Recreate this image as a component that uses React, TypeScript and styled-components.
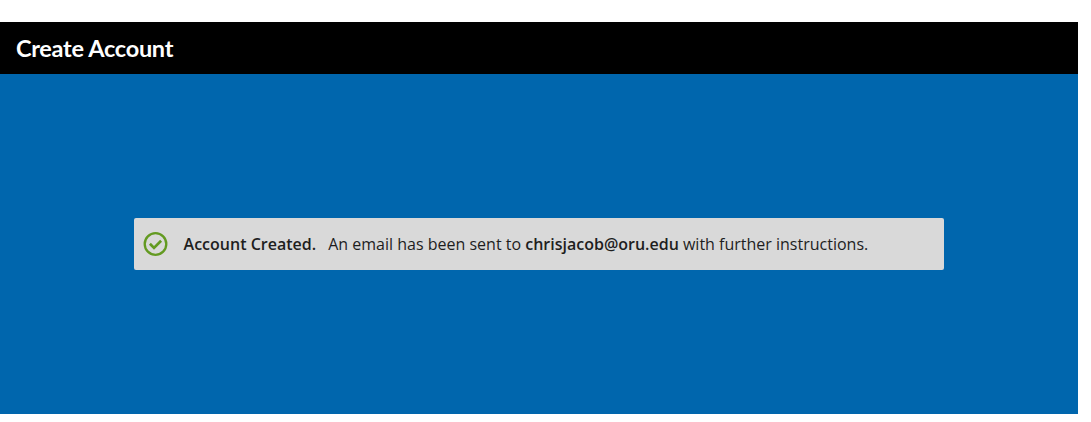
import React from "react";
import styled, { createGlobalStyle } from "styled-components";

const GlobalStyle = createGlobalStyle`
  body { margin: 0; background: #fff; }
`;

const Page = styled.div`
  box-sizing: border-box;
  height: 422px;
  padding: 22px 13px 8px 0;
  display: flex;
  flex-direction: column;
`;

const Header = styled.header`
  height: 52px;
  box-sizing: border-box;
  padding: 0 16px 1px;
  display: flex;
  align-items: center;
  background: #000;
`;

const Title = styled.h1`
  margin: 0;
  color: #fff;
  font: 700 23.5px/30px Lato, sans-serif;
  letter-spacing: -0.29px;
  white-space: nowrap;
`;

const Main = styled.main`
  flex: 1;
  display: flex;
  align-items: center;
  justify-content: center;
  background: #0066ad;
`;

const Alert = styled.div`
  box-sizing: border-box;
  width: 810px;
  height: 52px;
  padding: 0 9px;
  display: flex;
  align-items: center;
  border-radius: 2px;
  background: #d9d9d9;
`;

const CheckIcon = styled.svg`
  flex: none;
  width: 25px;
  height: 26px;
  margin-right: 15.6px;
`;

const Message = styled.p`
  margin: 0;
  color: #1e1e1e;
  font: 400 16px/24px "Open Sans", sans-serif;
  white-space: nowrap;
`;

const Strong = styled.strong<{ $gap?: number }>`
  font-weight: 600;
  margin-right: ${({ $gap = 0 }) => $gap}px;
`;

export default function App() {
  return (
    <>
      <GlobalStyle />
      <Page>
        <Header>
          <Title>Create Account</Title>
        </Header>
        <Main>
          <Alert role="status">
            <CheckIcon viewBox="0 0 25 26" fill="none" stroke="#639a21">
              <circle cx="12.5" cy="13" r="10.8" strokeWidth="2.3" />
              <path d="M6.9 12.8l4.1 4.1 7.1-7.1" strokeWidth="2.7" />
            </CheckIcon>
            <Message>
              <Strong $gap={8}>Account Created.</Strong> An email has been sent to{" "}
              <Strong>chrisjacob@oru.edu</Strong> with further instructions.
            </Message>
          </Alert>
        </Main>
      </Page>
    </>
  );
}
